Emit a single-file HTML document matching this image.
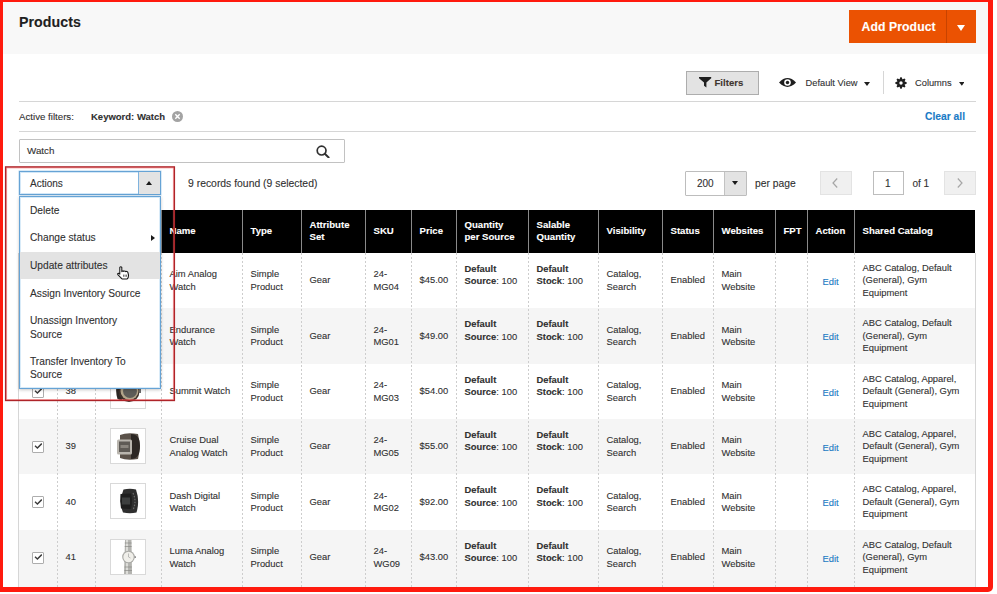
<!DOCTYPE html>
<html><head><meta charset="utf-8"><title>Products</title>
<style>
*{box-sizing:border-box;margin:0;padding:0}
html,body{width:997px;height:594px;overflow:hidden;background:#fff}
body{position:relative;font-family:"Liberation Sans",sans-serif;color:#303030;-webkit-text-stroke:0.1px currentColor}
.a{position:absolute}
.hdrbg{left:0;top:0;width:990px;height:54px;background:#f8f8f8}
.title{left:19px;top:13.6px;font-size:14.2px;font-weight:bold;color:#1f1f1f;letter-spacing:0.05px}
.addbtn{left:849px;top:10px;width:127px;height:33px;background:#eb5202}
.addbtn .t{position:absolute;left:12.5px;top:9.5px;font-size:12.2px;font-weight:bold;color:#fff;letter-spacing:0.1px}
.addbtn .sep{position:absolute;left:97px;top:0;width:1px;height:33px;background:#c84300}
.addbtn .tri{position:absolute;left:107.5px;top:14.5px;width:0;height:0;border-left:4px solid transparent;border-right:4px solid transparent;border-top:6.5px solid #fff}
.hline{height:1px;background:#d6d6d6}
.filters{left:686px;top:71px;width:73px;height:24px;background:#e3e3e3;border:1px solid #adadad}
.filters .t{position:absolute;left:27.5px;top:5px;font-size:9.6px;font-weight:bold;color:#41362f}
.t10{font-size:9.8px;color:#303030;white-space:nowrap}
.cell{position:absolute;display:flex;align-items:center;font-size:9.4px;line-height:12.5px;color:#303030;white-space:nowrap}
.hcell{position:absolute;display:flex;align-items:center;font-size:9.6px;line-height:11.8px;color:#fff;font-weight:bold;white-space:nowrap}
.vd{position:absolute;width:1px;background:repeating-linear-gradient(to bottom,#cdcdcd 0,#cdcdcd 2px,transparent 2px,transparent 4px)}
.vh{position:absolute;width:1px;background:#8a8a8a}
.cb{position:absolute;width:12px;height:12px;border:1px solid #adadad;background:#fff;border-radius:1px}
.thumb{position:absolute;width:36px;height:36px;border:1px solid #d9d9d9;background:#fff;overflow:hidden}
.edit{color:#1979c3}
.menu{left:19px;top:196px;width:142px;height:193px;background:#fff;border:1px solid #66a3d5;box-shadow:inset 0 0 0 1px #d9ebf8,0 1px 3px rgba(0,0,0,.22)}
.mi{position:absolute;left:0;width:140px;font-size:10.2px;line-height:13.6px;color:#303030;padding-left:10px;white-space:nowrap}
.redbox{border:1.5px solid #a82328;box-shadow:inset 0 0 0 1px rgba(255,110,110,.55),0 0 0 0.6px rgba(255,120,120,.45)}
.frame{left:-2.5px;top:-2.6px;width:995px;height:594.6px;border:5px solid #ff1a0e;border-radius:0 0 5px 0}
</style></head><body>

<div class="a hdrbg"></div>
<div class="a title">Products</div>
<div class="a addbtn"><span class="t">Add Product</span><span class="sep"></span><span class="tri"></span></div>
<div class="a filters"><svg class="a" style="left:11.8px;top:5px" width="13" height="11" viewBox="0 0 13 11"><path d="M0 0H12.2V1.2L7.4 5.6V10.4L5 8.8V5.6L0 1.2Z" fill="#1f1f1f"/></svg><span class="t">Filters</span></div>
<svg class="a" style="left:779px;top:77.7px" width="17" height="9" viewBox="0 0 17 9"><path d="M0 4.5Q8.5 -4.3 17 4.5Q8.5 13.3 0 4.5Z" fill="#1f1f1f"/><circle cx="8.5" cy="4.5" r="3.3" fill="#fff"/><circle cx="8.5" cy="4.5" r="1.7" fill="#1f1f1f"/></svg>
<div class="a t10" style="left:805.5px;top:78px;font-size:9.3px">Default View</div>
<svg class="a" style="left:863.6px;top:81.5px" width="6" height="4" viewBox="0 0 6 4"><path d="M0 0H6L3 4Z" fill="#1f1f1f"/></svg>
<div class="a" style="left:883px;top:71px;width:1px;height:23px;background:#d6d6d6"></div>
<svg class="a" style="left:895.3px;top:77.2px" width="12" height="12" viewBox="0 0 12 12"><path fill="#1f1f1f" fill-rule="evenodd" d="M4.59 2.26 L5.32 0.34 L6.68 0.34 L7.41 2.26 L7.65 2.36 L9.52 1.52 L10.48 2.48 L9.64 4.35 L9.74 4.59 L11.66 5.32 L11.66 6.68 L9.74 7.41 L9.64 7.65 L10.48 9.52 L9.52 10.48 L7.65 9.64 L7.41 9.74 L6.68 11.66 L5.32 11.66 L4.59 9.74 L4.35 9.64 L2.48 10.48 L1.52 9.52 L2.36 7.65 L2.26 7.41 L0.34 6.68 L0.34 5.32 L2.26 4.59 L2.36 4.35 L1.52 2.48 L2.48 1.52 L4.35 2.36Z M7.7 6A1.7 1.7 0 1 0 4.3 6A1.7 1.7 0 1 0 7.7 6Z"/></svg>
<div class="a t10" style="left:915px;top:78px;font-size:9.3px">Columns</div>
<svg class="a" style="left:958.8px;top:81.8px" width="5.6" height="3.8" viewBox="0 0 6 4"><path d="M0 0H6L3 4Z" fill="#1f1f1f"/></svg>
<div class="a hline" style="left:19px;top:101px;width:957px"></div>
<div class="a t10" style="left:19px;top:111px;font-size:9.7px">Active filters:</div>
<div class="a t10" style="left:91px;top:111px;font-size:9.5px;font-weight:bold;color:#303030">Keyword: Watch</div>
<svg class="a" style="left:172px;top:110.5px" width="11" height="11" viewBox="0 0 11 11"><circle cx="5.5" cy="5.5" r="5.5" fill="#a3a3a3"/><path d="M3.3 3.3L7.7 7.7M7.7 3.3L3.3 7.7" stroke="#fff" stroke-width="1.4"/></svg>
<div class="a t10" style="left:925px;top:111px;font-size:10.3px;font-weight:bold;color:#1a7bc6">Clear all</div>
<div class="a hline" style="left:19px;top:131px;width:957px"></div>
<div class="a" style="left:19px;top:139px;width:326px;height:24px;border:1px solid #c2c2c2;border-radius:1px;background:#fff"></div>
<div class="a t10" style="left:27px;top:145px;font-size:9.8px">Watch</div>
<svg class="a" style="left:316px;top:145px" width="14" height="13" viewBox="0 0 14 13"><circle cx="5.6" cy="5.6" r="4.4" fill="none" stroke="#303030" stroke-width="1.7"/><path d="M8.8 8.8L12.6 12.4" stroke="#303030" stroke-width="2" stroke-linecap="round"/></svg>
<div class="a" style="left:19px;top:171px;width:142px;height:24px;border:1px solid #66a3d5;background:#fff;box-shadow:inset 0 0 0 1px #d3e7f7,0 0 0 0.5px #b5d5ee"></div>
<div class="a" style="left:137.5px;top:172px;width:22.5px;height:22px;background:#e3e3e3;border-left:1px solid #7fb3de"></div>
<svg class="a" style="left:146px;top:181px" width="6" height="4" viewBox="0 0 6 4"><path d="M0 4H6L3 0Z" fill="#1a1a1a"/></svg>
<div class="a t10" style="left:30px;top:177.5px;font-size:10px">Actions</div>
<div class="a t10" style="left:188px;top:177.5px;font-size:10.4px">9 records found (9 selected)</div>
<div class="a" style="left:684.5px;top:171px;width:62px;height:24.5px;border:1px solid #bdbdbd;border-radius:1px;background:#fff"></div>
<div class="a" style="left:723.5px;top:172px;width:22px;height:22.5px;background:#e3e3e3;border-left:1px solid #c2c2c2"></div>
<svg class="a" style="left:732px;top:181.2px" width="6" height="4" viewBox="0 0 6 4"><path d="M0 0H6L3 4Z" fill="#1a1a1a"/></svg>
<div class="a t10" style="left:697px;top:178px;font-size:10px">200</div>
<div class="a t10" style="left:755px;top:178px;font-size:10.3px">per page</div>
<div class="a" style="left:820px;top:171px;width:32px;height:24px;border:1px solid #e3e3e3;background:#f0f0f0"></div>
<svg class="a" style="left:832px;top:178px" width="6" height="10" viewBox="0 0 6 10"><path d="M5.2 0.5L1 5L5.2 9.5" fill="none" stroke="#a6a6a6" stroke-width="1.2"/></svg>
<div class="a" style="left:873px;top:171px;width:31px;height:24px;border:1px solid #bdbdbd;background:#fff"></div>
<div class="a t10" style="left:885px;top:178px;font-size:10px">1</div>
<div class="a t10" style="left:912.5px;top:178px;font-size:10px">of 1</div>
<div class="a" style="left:944px;top:171px;width:32px;height:24px;border:1px solid #e3e3e3;background:#f0f0f0"></div>
<svg class="a" style="left:957px;top:178px" width="6" height="10" viewBox="0 0 6 10"><path d="M0.8 0.5L5 5L0.8 9.5" fill="none" stroke="#a6a6a6" stroke-width="1.2"/></svg>
<div class="a" style="left:19px;top:210px;width:956px;height:43px;background:#000"></div>
<div class="vh" style="left:57px;top:210px;height:43px"></div>
<div class="vh" style="left:95px;top:210px;height:43px"></div>
<div class="vh" style="left:161px;top:210px;height:43px"></div>
<div class="vh" style="left:242px;top:210px;height:43px"></div>
<div class="vh" style="left:301px;top:210px;height:43px"></div>
<div class="vh" style="left:365px;top:210px;height:43px"></div>
<div class="vh" style="left:411px;top:210px;height:43px"></div>
<div class="vh" style="left:456px;top:210px;height:43px"></div>
<div class="vh" style="left:528px;top:210px;height:43px"></div>
<div class="vh" style="left:598px;top:210px;height:43px"></div>
<div class="vh" style="left:662px;top:210px;height:43px"></div>
<div class="vh" style="left:713px;top:210px;height:43px"></div>
<div class="vh" style="left:775px;top:210px;height:43px"></div>
<div class="vh" style="left:807px;top:210px;height:43px"></div>
<div class="vh" style="left:854px;top:210px;height:43px"></div>
<div class="hcell" style="left:169.5px;top:209.3px;height:43px"><div>Name</div></div>
<div class="hcell" style="left:250.5px;top:209.3px;height:43px"><div>Type</div></div>
<div class="hcell" style="left:309.5px;top:209.3px;height:43px"><div>Attribute<br>Set</div></div>
<div class="hcell" style="left:373.5px;top:209.3px;height:43px"><div>SKU</div></div>
<div class="hcell" style="left:419.5px;top:209.3px;height:43px"><div>Price</div></div>
<div class="hcell" style="left:464.5px;top:209.3px;height:43px"><div>Quantity<br>per Source</div></div>
<div class="hcell" style="left:536.5px;top:209.3px;height:43px"><div>Salable<br>Quantity</div></div>
<div class="hcell" style="left:606.5px;top:209.3px;height:43px"><div>Visibility</div></div>
<div class="hcell" style="left:670.5px;top:209.3px;height:43px"><div>Status</div></div>
<div class="hcell" style="left:721.5px;top:209.3px;height:43px"><div>Websites</div></div>
<div class="hcell" style="left:783.5px;top:209.3px;height:43px"><div>FPT</div></div>
<div class="hcell" style="left:815.5px;top:209.3px;height:43px"><div>Action</div></div>
<div class="hcell" style="left:862.5px;top:209.3px;height:43px"><div>Shared Catalog</div></div>
<div class="a" style="left:19px;top:253px;width:956px;height:55px;background:#fff"></div>
<div class="cb" style="left:32px;top:274.5px"><svg class="a" style="left:0.8px;top:0.5px" width="8" height="7" viewBox="0 0 8 7"><path d="M1 3.8L3.4 6L7.8 1.6" fill="none" stroke="#3a3a3a" stroke-width="1.4"/></svg></div>
<div class="cell" style="left:65.5px;top:253px;height:55px;"><div>36</div></div>
<div class="cell" style="left:169.5px;top:253px;height:55px;"><div>Aim Analog<br>Watch</div></div>
<div class="cell" style="left:250.5px;top:253px;height:55px;"><div>Simple<br>Product</div></div>
<div class="cell" style="left:309.5px;top:253px;height:55px;"><div>Gear</div></div>
<div class="cell" style="left:373.5px;top:253px;height:55px;"><div>24-<br>MG04</div></div>
<div class="cell" style="left:419.5px;top:253px;height:55px;"><div>$45.00</div></div>
<div class="cell" style="left:464.5px;top:253px;height:55px;margin-top:-5.5px"><div><b>Default<br>Source</b>: 100</div></div>
<div class="cell" style="left:536.5px;top:253px;height:55px;margin-top:-5.5px"><div><b>Default<br>Stock</b>: 100</div></div>
<div class="cell" style="left:606.5px;top:253px;height:55px;"><div>Catalog,<br>Search</div></div>
<div class="cell" style="left:670.5px;top:253px;height:55px;"><div>Enabled</div></div>
<div class="cell" style="left:721.5px;top:253px;height:55px;"><div>Main<br>Website</div></div>
<div class="cell" style="left:862.5px;top:253px;height:55px;"><div>ABC Catalog, Default<br>(General), Gym<br>Equipment</div></div>
<div class="cell edit" style="left:807px;width:47px;justify-content:center;top:254.5px;height:55px">Edit</div>
<div class="thumb" style="left:110px;top:261.9px"></div>
<div class="a" style="left:19px;top:308px;width:956px;height:56px;background:#f5f5f5"></div>
<div class="cb" style="left:32px;top:330.0px"><svg class="a" style="left:0.8px;top:0.5px" width="8" height="7" viewBox="0 0 8 7"><path d="M1 3.8L3.4 6L7.8 1.6" fill="none" stroke="#3a3a3a" stroke-width="1.4"/></svg></div>
<div class="cell" style="left:65.5px;top:308px;height:56px;"><div>37</div></div>
<div class="cell" style="left:169.5px;top:308px;height:56px;"><div>Endurance<br>Watch</div></div>
<div class="cell" style="left:250.5px;top:308px;height:56px;"><div>Simple<br>Product</div></div>
<div class="cell" style="left:309.5px;top:308px;height:56px;"><div>Gear</div></div>
<div class="cell" style="left:373.5px;top:308px;height:56px;"><div>24-<br>MG01</div></div>
<div class="cell" style="left:419.5px;top:308px;height:56px;"><div>$49.00</div></div>
<div class="cell" style="left:464.5px;top:308px;height:56px;margin-top:-5.5px"><div><b>Default<br>Source</b>: 100</div></div>
<div class="cell" style="left:536.5px;top:308px;height:56px;margin-top:-5.5px"><div><b>Default<br>Stock</b>: 100</div></div>
<div class="cell" style="left:606.5px;top:308px;height:56px;"><div>Catalog,<br>Search</div></div>
<div class="cell" style="left:670.5px;top:308px;height:56px;"><div>Enabled</div></div>
<div class="cell" style="left:721.5px;top:308px;height:56px;"><div>Main<br>Website</div></div>
<div class="cell" style="left:862.5px;top:308px;height:56px;"><div>ABC Catalog, Default<br>(General), Gym<br>Equipment</div></div>
<div class="cell edit" style="left:807px;width:47px;justify-content:center;top:309.5px;height:56px">Edit</div>
<div class="thumb" style="left:110px;top:317.4px"></div>
<div class="a" style="left:19px;top:364px;width:956px;height:55px;background:#fff"></div>
<div class="cb" style="left:32px;top:385.5px"><svg class="a" style="left:0.8px;top:0.5px" width="8" height="7" viewBox="0 0 8 7"><path d="M1 3.8L3.4 6L7.8 1.6" fill="none" stroke="#3a3a3a" stroke-width="1.4"/></svg></div>
<div class="cell" style="left:65.5px;top:364px;height:55px;"><div>38</div></div>
<div class="cell" style="left:169.5px;top:364px;height:55px;"><div>Summit Watch</div></div>
<div class="cell" style="left:250.5px;top:364px;height:55px;"><div>Simple<br>Product</div></div>
<div class="cell" style="left:309.5px;top:364px;height:55px;"><div>Gear</div></div>
<div class="cell" style="left:373.5px;top:364px;height:55px;"><div>24-<br>MG03</div></div>
<div class="cell" style="left:419.5px;top:364px;height:55px;"><div>$54.00</div></div>
<div class="cell" style="left:464.5px;top:364px;height:55px;margin-top:-5.5px"><div><b>Default<br>Source</b>: 100</div></div>
<div class="cell" style="left:536.5px;top:364px;height:55px;margin-top:-5.5px"><div><b>Default<br>Stock</b>: 100</div></div>
<div class="cell" style="left:606.5px;top:364px;height:55px;"><div>Catalog,<br>Search</div></div>
<div class="cell" style="left:670.5px;top:364px;height:55px;"><div>Enabled</div></div>
<div class="cell" style="left:721.5px;top:364px;height:55px;"><div>Main<br>Website</div></div>
<div class="cell" style="left:862.5px;top:364px;height:55px;"><div>ABC Catalog, Apparel,<br>Default (General), Gym<br>Equipment</div></div>
<div class="cell edit" style="left:807px;width:47px;justify-content:center;top:365.5px;height:55px">Edit</div>
<div class="thumb" style="left:110px;top:372.9px"><svg class="a" style="left:0;top:0" width="34" height="34" viewBox="0 0 34 34"><path d="M6 10Q4 17 6.5 25L11 27V8Z" fill="#2b2622"/><circle cx="18" cy="17.5" r="10.5" fill="#3b302a"/><circle cx="18.5" cy="17" r="9" fill="#b3a58a"/><circle cx="19" cy="17" r="7" fill="#5d5c58"/><rect x="28" y="15" width="2" height="4" fill="#6a6a6a"/></svg></div>
<div class="a" style="left:19px;top:419px;width:956px;height:55px;background:#f5f5f5"></div>
<div class="cb" style="left:32px;top:440.5px"><svg class="a" style="left:0.8px;top:0.5px" width="8" height="7" viewBox="0 0 8 7"><path d="M1 3.8L3.4 6L7.8 1.6" fill="none" stroke="#3a3a3a" stroke-width="1.4"/></svg></div>
<div class="cell" style="left:65.5px;top:419px;height:55px;"><div>39</div></div>
<div class="cell" style="left:169.5px;top:419px;height:55px;"><div>Cruise Dual<br>Analog Watch</div></div>
<div class="cell" style="left:250.5px;top:419px;height:55px;"><div>Simple<br>Product</div></div>
<div class="cell" style="left:309.5px;top:419px;height:55px;"><div>Gear</div></div>
<div class="cell" style="left:373.5px;top:419px;height:55px;"><div>24-<br>MG05</div></div>
<div class="cell" style="left:419.5px;top:419px;height:55px;"><div>$55.00</div></div>
<div class="cell" style="left:464.5px;top:419px;height:55px;margin-top:-5.5px"><div><b>Default<br>Source</b>: 100</div></div>
<div class="cell" style="left:536.5px;top:419px;height:55px;margin-top:-5.5px"><div><b>Default<br>Stock</b>: 100</div></div>
<div class="cell" style="left:606.5px;top:419px;height:55px;"><div>Catalog,<br>Search</div></div>
<div class="cell" style="left:670.5px;top:419px;height:55px;"><div>Enabled</div></div>
<div class="cell" style="left:721.5px;top:419px;height:55px;"><div>Main<br>Website</div></div>
<div class="cell" style="left:862.5px;top:419px;height:55px;"><div>ABC Catalog, Apparel,<br>Default (General), Gym<br>Equipment</div></div>
<div class="cell edit" style="left:807px;width:47px;justify-content:center;top:420.5px;height:55px">Edit</div>
<div class="thumb" style="left:110px;top:427.9px"><svg class="a" style="left:0;top:0" width="34" height="34" viewBox="0 0 34 34"><path d="M9 6Q16 3 27 5Q30 17 27 30Q16 32 9 29Z" fill="#5b524a"/><path d="M20 5Q29 5 29 17Q29 30 20 30Z" fill="#2c2724"/><rect x="6" y="10.5" width="15" height="15" rx="1.5" fill="#b9b5ae"/><rect x="8" y="12.5" width="11" height="10.5" fill="#5e5a55"/><rect x="9.5" y="16" width="8" height="3" fill="#8a857e"/></svg></div>
<div class="a" style="left:19px;top:474px;width:956px;height:56px;background:#fff"></div>
<div class="cb" style="left:32px;top:496.0px"><svg class="a" style="left:0.8px;top:0.5px" width="8" height="7" viewBox="0 0 8 7"><path d="M1 3.8L3.4 6L7.8 1.6" fill="none" stroke="#3a3a3a" stroke-width="1.4"/></svg></div>
<div class="cell" style="left:65.5px;top:474px;height:56px;"><div>40</div></div>
<div class="cell" style="left:169.5px;top:474px;height:56px;"><div>Dash Digital<br>Watch</div></div>
<div class="cell" style="left:250.5px;top:474px;height:56px;"><div>Simple<br>Product</div></div>
<div class="cell" style="left:309.5px;top:474px;height:56px;"><div>Gear</div></div>
<div class="cell" style="left:373.5px;top:474px;height:56px;"><div>24-<br>MG02</div></div>
<div class="cell" style="left:419.5px;top:474px;height:56px;"><div>$92.00</div></div>
<div class="cell" style="left:464.5px;top:474px;height:56px;margin-top:-5.5px"><div><b>Default<br>Source</b>: 100</div></div>
<div class="cell" style="left:536.5px;top:474px;height:56px;margin-top:-5.5px"><div><b>Default<br>Stock</b>: 100</div></div>
<div class="cell" style="left:606.5px;top:474px;height:56px;"><div>Catalog,<br>Search</div></div>
<div class="cell" style="left:670.5px;top:474px;height:56px;"><div>Enabled</div></div>
<div class="cell" style="left:721.5px;top:474px;height:56px;"><div>Main<br>Website</div></div>
<div class="cell" style="left:862.5px;top:474px;height:56px;"><div>ABC Catalog, Apparel,<br>Default (General), Gym<br>Equipment</div></div>
<div class="cell edit" style="left:807px;width:47px;justify-content:center;top:475.5px;height:56px">Edit</div>
<div class="thumb" style="left:110px;top:483.4px"><svg class="a" style="left:0;top:0" width="34" height="34" viewBox="0 0 34 34"><path d="M12.5 5.5Q19 4 25 5.5Q29 17 25.5 28.5Q19 30 12 28.5Q7.5 17 12.5 5.5Z" fill="#2e2e2e"/><path d="M9.5 10Q8.5 17 10 24.5L20 25Q22 17 20 9.5Z" fill="#1e1e1e"/><rect x="11" y="13.5" width="8" height="7" fill="#3d3f3f"/><path d="M22 9Q26 17 22 26" stroke="#6a6a6a" stroke-width="1.2" fill="none" stroke-dasharray="1.5 1.5"/></svg></div>
<div class="a" style="left:19px;top:530px;width:956px;height:58px;background:#f5f5f5"></div>
<div class="cb" style="left:32px;top:551.5px"><svg class="a" style="left:0.8px;top:0.5px" width="8" height="7" viewBox="0 0 8 7"><path d="M1 3.8L3.4 6L7.8 1.6" fill="none" stroke="#3a3a3a" stroke-width="1.4"/></svg></div>
<div class="cell" style="left:65.5px;top:530px;height:55px;"><div>41</div></div>
<div class="cell" style="left:169.5px;top:530px;height:55px;"><div>Luma Analog<br>Watch</div></div>
<div class="cell" style="left:250.5px;top:530px;height:55px;"><div>Simple<br>Product</div></div>
<div class="cell" style="left:309.5px;top:530px;height:55px;"><div>Gear</div></div>
<div class="cell" style="left:373.5px;top:530px;height:55px;"><div>24-<br>WG09</div></div>
<div class="cell" style="left:419.5px;top:530px;height:55px;"><div>$43.00</div></div>
<div class="cell" style="left:464.5px;top:530px;height:55px;margin-top:-5.5px"><div><b>Default<br>Source</b>: 100</div></div>
<div class="cell" style="left:536.5px;top:530px;height:55px;margin-top:-5.5px"><div><b>Default<br>Stock</b>: 100</div></div>
<div class="cell" style="left:606.5px;top:530px;height:55px;"><div>Catalog,<br>Search</div></div>
<div class="cell" style="left:670.5px;top:530px;height:55px;"><div>Enabled</div></div>
<div class="cell" style="left:721.5px;top:530px;height:55px;"><div>Main<br>Website</div></div>
<div class="cell" style="left:862.5px;top:530px;height:55px;"><div>ABC Catalog, Default<br>(General), Gym<br>Equipment</div></div>
<div class="cell edit" style="left:807px;width:47px;justify-content:center;top:531.5px;height:55px">Edit</div>
<div class="thumb" style="left:110px;top:538.9px"><svg class="a" style="left:0;top:0" width="34" height="34" viewBox="0 0 34 34"><path d="M14 0H20.5L21 34H13Z" fill="#b4b4b0"/><rect x="15" y="0" width="2" height="34" fill="#dcdcd8"/><path d="M13.8 3H20.6M13.7 6.5H20.7M13.5 27H20.9M13.4 30.5H21" stroke="#8a8a86" stroke-width="0.7"/><circle cx="17.5" cy="17" r="6.3" fill="#a9a9a5"/><circle cx="17.5" cy="17" r="5.2" fill="#f0efea"/><path d="M17.5 13.5V17L19.5 18" stroke="#999" stroke-width="0.6" fill="none"/><rect x="23.5" y="16.3" width="1.5" height="1.6" fill="#888"/></svg></div>
<div class="vd" style="left:57px;top:253px;height:335px"></div>
<div class="vd" style="left:95px;top:253px;height:335px"></div>
<div class="vd" style="left:161px;top:253px;height:335px"></div>
<div class="vd" style="left:242px;top:253px;height:335px"></div>
<div class="vd" style="left:301px;top:253px;height:335px"></div>
<div class="vd" style="left:365px;top:253px;height:335px"></div>
<div class="vd" style="left:411px;top:253px;height:335px"></div>
<div class="vd" style="left:456px;top:253px;height:335px"></div>
<div class="vd" style="left:528px;top:253px;height:335px"></div>
<div class="vd" style="left:598px;top:253px;height:335px"></div>
<div class="vd" style="left:662px;top:253px;height:335px"></div>
<div class="vd" style="left:713px;top:253px;height:335px"></div>
<div class="vd" style="left:775px;top:253px;height:335px"></div>
<div class="vd" style="left:807px;top:253px;height:335px"></div>
<div class="vd" style="left:854px;top:253px;height:335px"></div>
<div class="a" style="left:18px;top:253px;width:1px;height:335px;background:#d6d6d6"></div>
<div class="a" style="left:975px;top:253px;width:1px;height:335px;background:#d6d6d6"></div>
<div class="a menu">
<div class="a" style="left:0;top:55px;width:140px;height:27px;background:#e3e3e3"></div>
<div class="mi" style="top:6.800000000000011px"><div>Delete</div></div>
<div class="mi" style="top:34px"><div>Change status</div></div>
<div class="mi" style="top:61.5px"><div>Update attributes</div></div>
<div class="mi" style="top:89.5px"><div>Assign Inventory Source</div></div>
<div class="mi" style="top:117px"><div>Unassign Inventory<br>Source</div></div>
<div class="mi" style="top:157.5px"><div>Transfer Inventory To<br>Source</div></div>
<svg class="a" style="left:131px;top:37.5px" width="4" height="6" viewBox="0 0 4 6"><path d="M0 0V6L4 3Z" fill="#1a1a1a"/></svg>
</div>
<svg class="a" style="left:117.3px;top:266px" width="13" height="14" viewBox="0 0 13 14"><path d="M2.8 1.4Q3.8 0 4.8 1.4V5.6Q5.8 4.3 6.8 5.4Q7.8 4.4 8.8 5.7Q9.9 4.9 10.8 6.2L11.5 9Q11.7 11.4 10.2 12.9H5L0.8 8.6Q0.3 7.4 1.7 7.2L2.8 8.2Z" fill="#fff" stroke="#161616" stroke-width="1.05" stroke-linejoin="round"/><path d="M6.6 8.6V10.8M8.1 8.6V10.8M9.6 8.6V10.8" stroke="#444" stroke-width="0.8"/></svg>
<svg class="a" style="left:0;top:0" width="997" height="594" viewBox="0 0 997 594"><rect x="6.3" y="167.6" width="167.4" height="232.2" fill="none" stroke="rgba(245,95,95,.55)" stroke-width="1.6"/><rect x="5.6" y="166.9" width="168.8" height="233.6" fill="none" stroke="#ae2429" stroke-width="1.35"/></svg>
<div class="a frame"></div>
</body></html>
